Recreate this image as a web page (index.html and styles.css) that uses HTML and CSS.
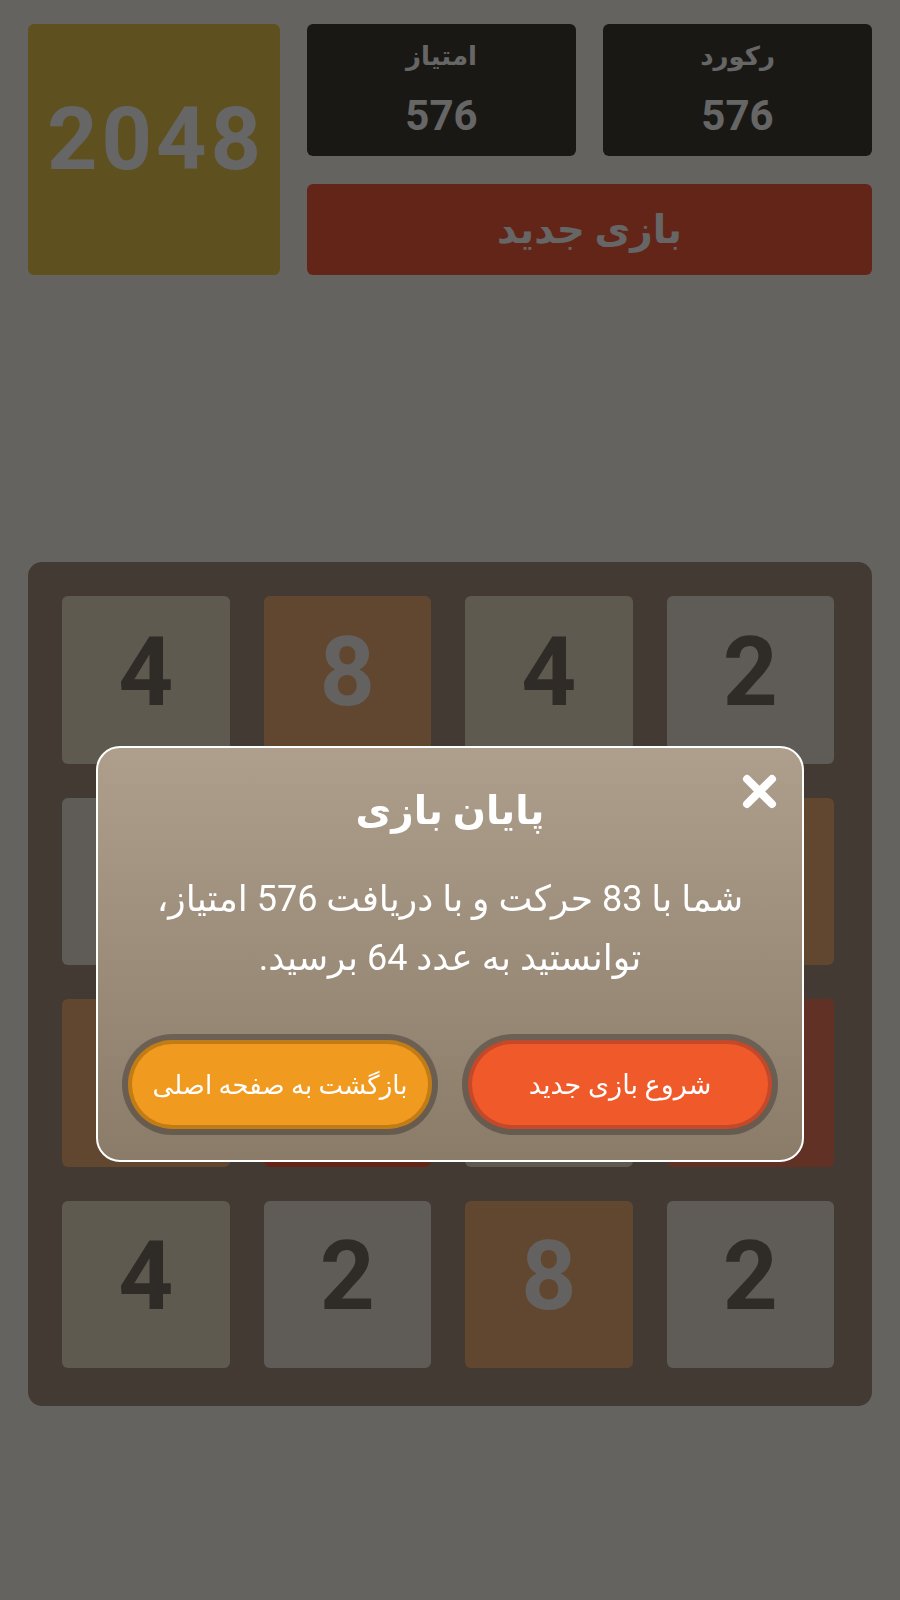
FILE: index.html
```html
<!DOCTYPE html>
<html lang="fa" dir="rtl">
<head>
    <meta charset="UTF-8">
    <meta name="viewport" content="width=device-width, initial-scale=1.0">
    <title>2048</title>
    <link rel="stylesheet" href="styles.css">
</head>
<body>
    <div class="game">
        <header class="top">
            <div class="top-side">
                <div class="scores">
                    <div class="score-box">
                        <div class="score-label">رکورد</div>
                        <div class="score-value">576</div>
                    </div>
                    <div class="score-box">
                        <div class="score-label">امتیاز</div>
                        <div class="score-value">576</div>
                    </div>
                </div>
                <button class="new-game">بازی جدید</button>
            </div>
            <div class="logo">2048</div>
        </header>

        <!-- صفحه بازی: چهار ردیف، از چپ به راست -->
        <div class="board" dir="ltr">
            <div class="tile t4">4</div>
            <div class="tile t8">8</div>
            <div class="tile t4">4</div>
            <div class="tile t2">2</div>

            <div class="tile t2">2</div>
            <div class="tile t16">16</div>
            <div class="tile t4">4</div>
            <div class="tile t8">8</div>

            <div class="tile t8">8</div>
            <div class="tile t64">64</div>
            <div class="tile t4">4</div>
            <div class="tile t32">32</div>

            <div class="tile t4">4</div>
            <div class="tile t2">2</div>
            <div class="tile t8">8</div>
            <div class="tile t2">2</div>
        </div>
    </div>

    <div class="overlay">
        <div class="modal">
            <button class="close-btn" aria-label="بستن">
                <svg width="37" height="37" viewBox="0 0 37 37">
                    <path d="M6 6 L31 31 M31 6 L6 31" stroke="#fff" stroke-width="8" stroke-linecap="round" fill="none"/>
                </svg>
            </button>
            <h2 class="modal-title">پایان بازی</h2>
            <p class="modal-text">شما با 83 حرکت و با دریافت 576 امتیاز،<br>توانستید به عدد 64 برسید.</p>
            <div class="modal-actions">
                <button class="pill pill-red">شروع بازی جدید</button>
                <button class="pill pill-orange">بازگشت به صفحه اصلی</button>
            </div>
        </div>
    </div>
</body>
</html>
```

FILE: styles.css
```css
:root {
    --page-bg: #faf8ef;
    --board-bg: #a89282;
    --dark-text: #776e65;
    --fa-font: Roboto, "DejaVu Sans", sans-serif;
}
* {
    margin: 0;
    padding: 0;
    box-sizing: border-box;
}
html, body {
    background: var(--page-bg);
    min-height: 100%;
}
body {
    font-family: var(--fa-font);
    height: 1600px;
}
button {
    font-family: inherit;
    border: none;
    cursor: pointer;
}
.game {
    padding: 24px 28px 0;
}

/* سربرگ */
.top {
    display: grid;
    grid-template-columns: 1fr 252px;
    gap: 27px;
}
.top-side {
    display: flex;
    flex-direction: column;
    gap: 28px;
}
.scores {
    display: grid;
    grid-template-columns: 1fr 1fr;
    gap: 27px;
}
.score-box {
    height: 132px;
    background: #413c33;
    border-radius: 6px;
    color: #fff;
    display: flex;
    flex-direction: column;
    align-items: center;
    padding-top: 14px;
}
.score-label {
    font-size: 26px;
    font-weight: bold;
    line-height: 36px;
}
.score-value {
    margin-top: 12px;
    font-size: 42px;
    font-weight: bold;
    line-height: 60px;
}
.new-game {
    height: 91px;
    background: #f65e3b;
    color: #fff;
    border-radius: 6px;
    font-size: 39px;
    font-weight: bold;
}
.logo {
    height: 251px;
    background: #edc850;
    border-radius: 6px;
    color: #fff;
    font-family: Roboto, sans-serif;
    font-size: 88px;
    font-weight: bold;
    letter-spacing: 4px;
    display: flex;
    align-items: center;
    justify-content: center;
    padding: 0 0 22px 4px;
}

/* صفحه */
.board {
    margin-top: 287px;
    height: 844px;
    background: var(--board-bg);
    border-radius: 14px;
    padding: 34px 38px 38px 34px;
    display: grid;
    grid-template-columns: repeat(4, 1fr);
    grid-template-rows: repeat(4, 1fr);
    gap: 34px;
}
.tile {
    border-radius: 6px;
    display: flex;
    align-items: center;
    justify-content: center;
    padding-bottom: 16px;
    font-family: Roboto, sans-serif;
    font-size: 96px;
    font-weight: bold;
    color: var(--dark-text);
}
.t2 { background: #eee4da; }
.t4 { background: #ede0c8; }
.t8 { background: #f2b179; color: #f9f6f2; }
.t16 { background: #f59563; color: #f9f6f2; }
.t32 { background: #f67c5f; color: #f9f6f2; }
.t64 { background: #f65e3b; color: #f9f6f2; }

/* پنجره پایان بازی */
.overlay {
    position: fixed;
    inset: 0;
    background: rgba(0, 0, 0, 0.6);
    display: flex;
    justify-content: center;
    align-items: flex-start;
    padding-top: 746px;
}
.modal {
    position: relative;
    width: 708px;
    border: 2px solid #fff;
    border-radius: 24px;
    background: linear-gradient(#ae9f8c, #8b7c6a);
    padding: 38px 24px 25px;
    text-align: center;
    color: #fff;
}
.close-btn {
    position: absolute;
    top: 25px;
    right: 24px;
    width: 37px;
    height: 37px;
    background: none;
    display: flex;
}
.modal-title {
    font-size: 39px;
    font-weight: bold;
    line-height: 50px;
}
.modal-text {
    margin-top: 34px;
    font-size: 36px;
    line-height: 59px;
}
.modal-actions {
    margin-top: 46px;
    display: grid;
    grid-template-columns: 1fr 1fr;
    gap: 24px;
}
.pill {
    height: 101px;
    border: 6px solid rgba(0, 0, 0, 0.28);
    background-clip: padding-box;
    border-radius: 60px;
    color: #fff;
    font-size: 26px;
}
.pill-red {
    font-size: 27px;
    background-color: #f05a2b;
    box-shadow: inset 0 0 0 4px #c4492a;
}
.pill-orange {
    background-color: #f09b20;
    box-shadow: inset 0 0 0 4px #c27c16;
}
```
